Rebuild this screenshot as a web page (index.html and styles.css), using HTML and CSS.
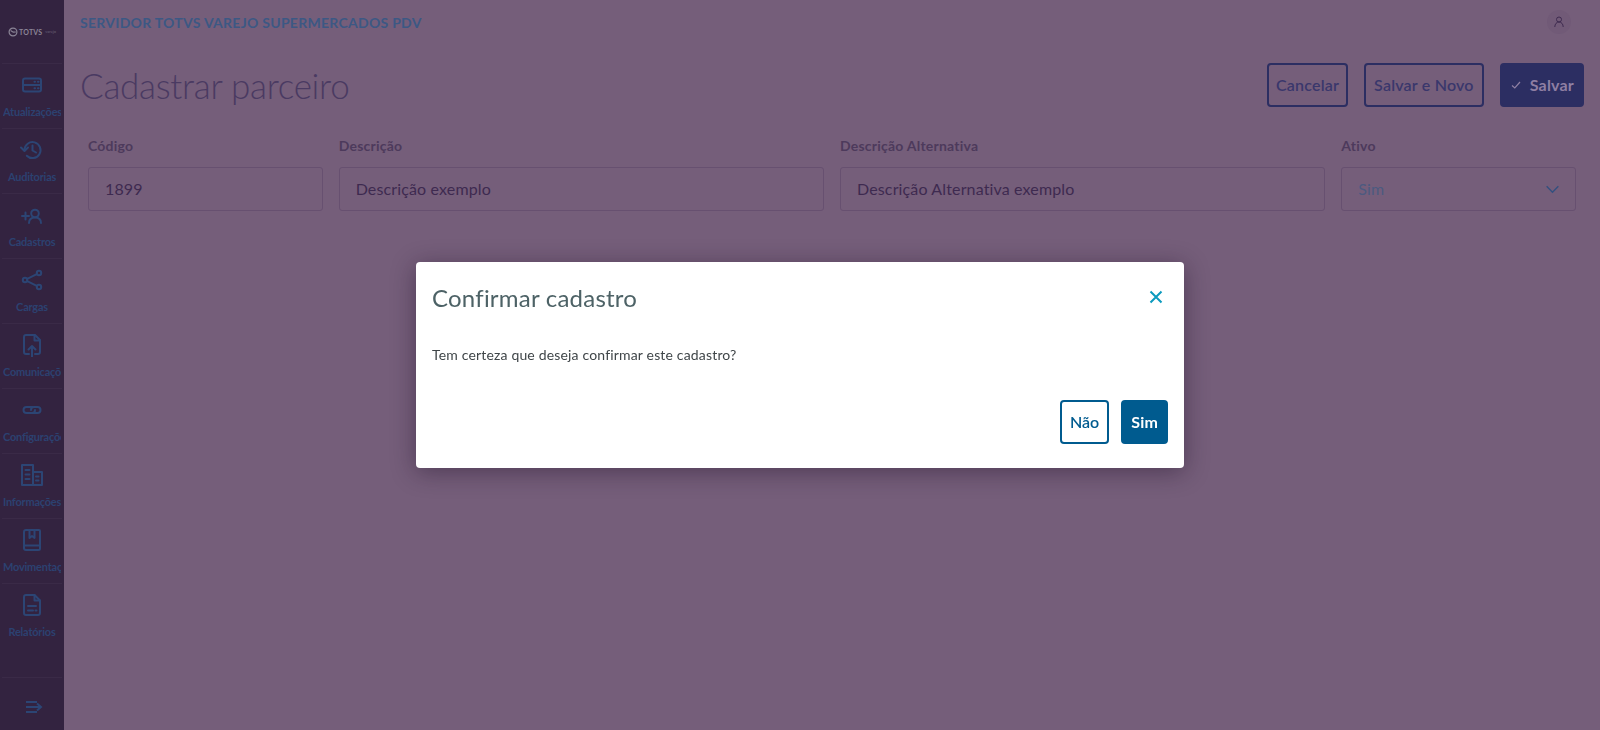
FILE: index.html
```html
<!DOCTYPE html>
<html lang="pt-BR">
<head>
<meta charset="utf-8">
<title>Cadastrar parceiro</title>
<link rel="stylesheet" href="styles.css">
</head>
<body>
<div class="app">
  <aside class="sidebar">
    <div class="logo">
      <svg class="logo-mark" viewBox="0 0 10 10"><circle cx="5" cy="5" r="3.9"/><path d="M2.6 3.6 L5.2 5.2 L7.8 5"/></svg>
      <span class="logo-name">TOTVS</span><span class="logo-sub">varejo</span>
    </div>
    <nav class="menu">
      <a class="item">
        <svg class="icon" viewBox="0 0 24 24"><rect x="3" y="5.500" width="18" height="13" rx="2"/><path d="M3 12h18M14.500 8.800h.5M18 8.800h.5M14.500 15.300h.5M18 15.300h.5"/></svg>
        <span class="label">Atualizações</span>
      </a>
      <a class="item">
        <svg class="icon" viewBox="0 0 24 24"><path d="M4.500 12a8 8 0 1 1 2.300 5.700"/><path d="M1 9.500 4.500 13 8 9.500"/><path d="M12.500 7.500v5l3.500 2"/></svg>
        <span class="label">Auditorias</span>
      </a>
      <a class="item">
        <svg class="icon" viewBox="0 0 24 24"><circle cx="15" cy="10.500" r="3.800"/><path d="M9 20c0-3.500 2.500-5.500 6-5.500s6 2 6 5.500"/><path d="M2 13h7M5.500 9.500v7"/></svg>
        <span class="label">Cadastros</span>
      </a>
      <a class="item">
        <svg class="icon" viewBox="0 0 24 24"><circle cx="19" cy="5" r="2.200"/><circle cx="5" cy="12" r="2.200"/><circle cx="19" cy="19" r="2.200"/><path d="M7.200 10.800 16.800 6.200M7.200 13.200l9.600 4.600"/></svg>
        <span class="label">Cargas</span>
      </a>
      <a class="item">
        <svg class="icon" viewBox="0 0 24 24"><path d="M9 21H6a2 2 0 0 1-2-2V4a2 2 0 0 1 2-2h9l5 5v12a2 2 0 0 1-2 2h-3"/><path d="M14.500 2v5.500H20"/><path d="M12 24V13M8.500 16.500 12 13l3.500 3.500"/></svg>
        <span class="label">Comunicações</span>
      </a>
      <a class="item">
        <svg class="icon" viewBox="0 0 24 24"><path d="M13 9H6.500a3 3 0 0 0 0 6H12a3 3 0 0 0 3-3"/><path d="M11 12a3 3 0 0 1 3-3h3.500a3 3 0 0 1 0 6H12"/></svg>
        <span class="label">Configurações</span>
      </a>
      <a class="item">
        <svg class="icon" viewBox="0 0 24 24"><path d="M2 22V2h11v20M13 9h9v13H2"/><path d="M5.500 7h4M5.500 11.500h4M5.500 16h4M16 13.500h2.500M16 17.500h2.500"/></svg>
        <span class="label">Informações</span>
      </a>
      <a class="item">
        <svg class="icon" viewBox="0 0 24 24"><path d="M20 17V3a1 1 0 0 0-1-1H6a2 2 0 0 0-2 2v16"/><path d="M4 17.500h16v3a1.500 1.500 0 0 1-1.500 1.500H6a2 2 0 0 1-2-2z"/><path d="M9.500 2v8l2.500-2 2.500 2V2"/></svg>
        <span class="label">Movimentações</span>
      </a>
      <a class="item">
        <svg class="icon" viewBox="0 0 24 24"><path d="M14.500 2H6a2 2 0 0 0-2 2v16a2 2 0 0 0 2 2h12a2 2 0 0 0 2-2V7.500z"/><path d="M14.500 2v5.500H20"/><path d="M8 13h8M8 17.500h5M15.500 17.500h1"/></svg>
        <span class="label">Relatórios</span>
      </a>
    </nav>
    <div class="collapse">
      <svg class="collapse-icon" viewBox="0 0 18 14"><path d="M1 2h11M1 7h15M1 12h11M12 3.500 16 7l-4 3.500"/></svg>
    </div>
  </aside>
  <main class="main">
    <header class="topbar">
      <span class="server">SERVIDOR TOTVS VAREJO SUPERMERCADOS PDV</span>
      <span class="avatar"><svg viewBox="0 0 12 12"><circle cx="6" cy="3.500" r="2.500"/><path d="M1.800 11c0-3 1.800-5 4.200-5s4.200 2 4.200 5"/></svg></span>
    </header>
    <section class="page-head">
      <h1 class="page-title">Cadastrar parceiro</h1>
      <div class="actions">
        <button class="btn btn-compact">Cancelar</button>
        <button class="btn">Salvar e Novo</button>
        <button class="btn btn-solid"><svg class="check" viewBox="0 0 12 12"><path d="M2 6.500 4.800 9 10 3"/></svg>Salvar</button>
      </div>
    </section>
    <form class="form">
      <div class="field">
        <label class="field-label">Código</label>
        <input class="field-input" value="1899">
      </div>
      <div class="field">
        <label class="field-label">Descrição</label>
        <input class="field-input" value="Descrição exemplo">
      </div>
      <div class="field">
        <label class="field-label">Descrição Alternativa</label>
        <input class="field-input" value="Descrição Alternativa exemplo">
      </div>
      <div class="field">
        <label class="field-label">Ativo</label>
        <div class="field-select"><span>Sim</span><svg viewBox="0 0 16 10"><path d="M1.500 1.500 8 8l6.500-6.500"/></svg></div>
      </div>
    </form>
  </main>
</div>
<div class="modal-layer">
  <div class="modal">
    <div class="modal-head">
      <h2 class="modal-title">Confirmar cadastro</h2>
      <svg class="modal-close" viewBox="0 0 14 14"><path d="M1.500 1.500l11 11M12.500 1.500l-11 11"/></svg>
    </div>
    <p class="modal-text">Tem certeza que deseja confirmar este cadastro?</p>
    <div class="modal-actions">
      <button class="mbtn">Não</button>
      <button class="mbtn mbtn-solid">Sim</button>
    </div>
  </div>
</div>
</body>
</html>
```
FILE: styles.css
```css
* { box-sizing: border-box; }
html, body { margin: 0; height: 100%; overflow: hidden; }
body { font-family: "Lato", "Noto Sans", sans-serif; background: #755e7a; }
.app { display: flex; height: 730px; }

.sidebar { width: 64px; flex: none; background: #332340; display: flex; flex-direction: column; }
.logo { height: 63px; display: flex; align-items: center; padding-left: 8px; gap: 1px; }
.logo-mark { width: 10px; height: 10px; fill: none; stroke: #8b8596; stroke-width: 1.2; }
.logo-name { font-size: 7px; font-weight: 700; color: #8b8596; letter-spacing: .2px; }
.logo-sub { font-size: 4px; color: #6b6178; margin-left: 2px; }
.menu { display: flex; flex-direction: column; }
.item { height: 65px; border-top: 1px solid #3a2a47; margin: 0 2px; padding: 9px 1px 0; display: flex; flex-direction: column; align-items: center; }
.icon { width: 24px; height: 24px; fill: none; stroke: #2c4574; stroke-width: 2; stroke-linecap: round; stroke-linejoin: round; flex: none; }
.label { width: 58px; margin-top: 7px; font-size: 11px; line-height: 16px; font-weight: 700; letter-spacing: -.22px; color: #2c4170; white-space: nowrap; overflow: hidden; text-align: center; }
.collapse { margin: 29px 2px 0; border-top: 1px solid #3a2a47; flex: 1; display: flex; justify-content: center; padding-top: 22px; }
.collapse-icon { width: 18px; height: 14px; margin-left: 4px; fill: none; stroke: #2c4574; stroke-width: 2; }

.main { flex: 1; padding: 0 16px; min-width: 0; }
.topbar { height: 44px; display: flex; align-items: center; justify-content: space-between; }
.server { font-size: 14px; font-weight: 700; color: #3c5884; letter-spacing: .28px; }
.avatar { width: 24px; height: 24px; margin-right: 13px; border-radius: 50%; background: #715a77; display: flex; align-items: center; justify-content: center; }
.avatar svg { width: 12px; height: 12px; fill: none; stroke: #3e2a4f; stroke-width: 1; }

.page-head { display: flex; justify-content: space-between; align-items: center; height: 44px; margin-top: 19px; }
.page-title { margin: 0; font-size: 35px; font-weight: 300; letter-spacing: -.28px; color: #4a3a62; line-height: 44px; }
.actions { display: flex; gap: 16px; }
.btn { height: 44px; padding: 0 8px 2px; background: none; border: 2px solid #2c2e62; border-radius: 4px; font: 600 16px "Lato", "Noto Sans", sans-serif; letter-spacing: .2px; color: #3a376c; display: flex; align-items: center; }
.btn-compact { padding-left: 7px; padding-right: 7px; }
.btn-solid { background: #2c2e62; color: #8f7fa3; font-weight: 700; }
.check { width: 12px; height: 12px; margin-right: 8px; margin-top: 2px; fill: none; stroke: #8f7fa3; stroke-width: 1.2; }

.form { display: grid; grid-template-columns: 2fr 4fr 4fr 2fr; margin-top: 27px; }
.field { padding: 0 8px; display: flex; flex-direction: column; min-width: 0; }
.field-label { font-size: 14px; line-height: 20px; font-weight: 700; letter-spacing: .22px; color: #4d3a5c; margin-top: 2px; margin-bottom: 11px; }
.field-input, .field-select { height: 44px; width: 100%; border: 1px solid #675070; border-radius: 3px; background: #755e7a; font: 16px "Lato", "Noto Sans", sans-serif; letter-spacing: .14px; padding: 0 16px 2px; color: #3e2a50; outline: none; }
.field-select { display: flex; align-items: center; justify-content: space-between; color: #4c5a80; }
.field-select svg { width: 15px; height: 9px; margin-right: -1px; margin-top: 2px; fill: none; stroke: #33507f; stroke-width: 1.6; }

.modal-layer { position: fixed; inset: 0; display: flex; align-items: center; justify-content: center; }
.modal { width: 768px; height: 206px; background: #fff; border-radius: 4px; box-shadow: 0 4px 24px rgba(30, 15, 40, .45); padding: 0 16px 24px; display: flex; flex-direction: column; }
.modal-head { height: 71px; display: flex; align-items: center; justify-content: space-between; }
.modal-title { margin: 0; font-size: 24px; font-weight: 400; letter-spacing: .22px; color: #4d6266; }
.modal-close { width: 14px; height: 14px; margin-right: 5px; margin-top: -2px; fill: none; stroke: #0c9abe; stroke-width: 2; }
.modal-text { margin: 12px 0 0; font-size: 14px; line-height: 20px; letter-spacing: .17px; color: #3f4548; }
.modal-actions { margin-top: auto; display: flex; justify-content: flex-end; gap: 12px; }
.mbtn { height: 44px; padding: 0 8px 2px; background: #fff; border: 2px solid #005b8f; border-radius: 4px; font: 600 16px "Lato", "Noto Sans", sans-serif; color: #005b8f; }
.mbtn-solid { background: #005b8f; color: #fff; font-weight: 700; letter-spacing: .2px; }
```
